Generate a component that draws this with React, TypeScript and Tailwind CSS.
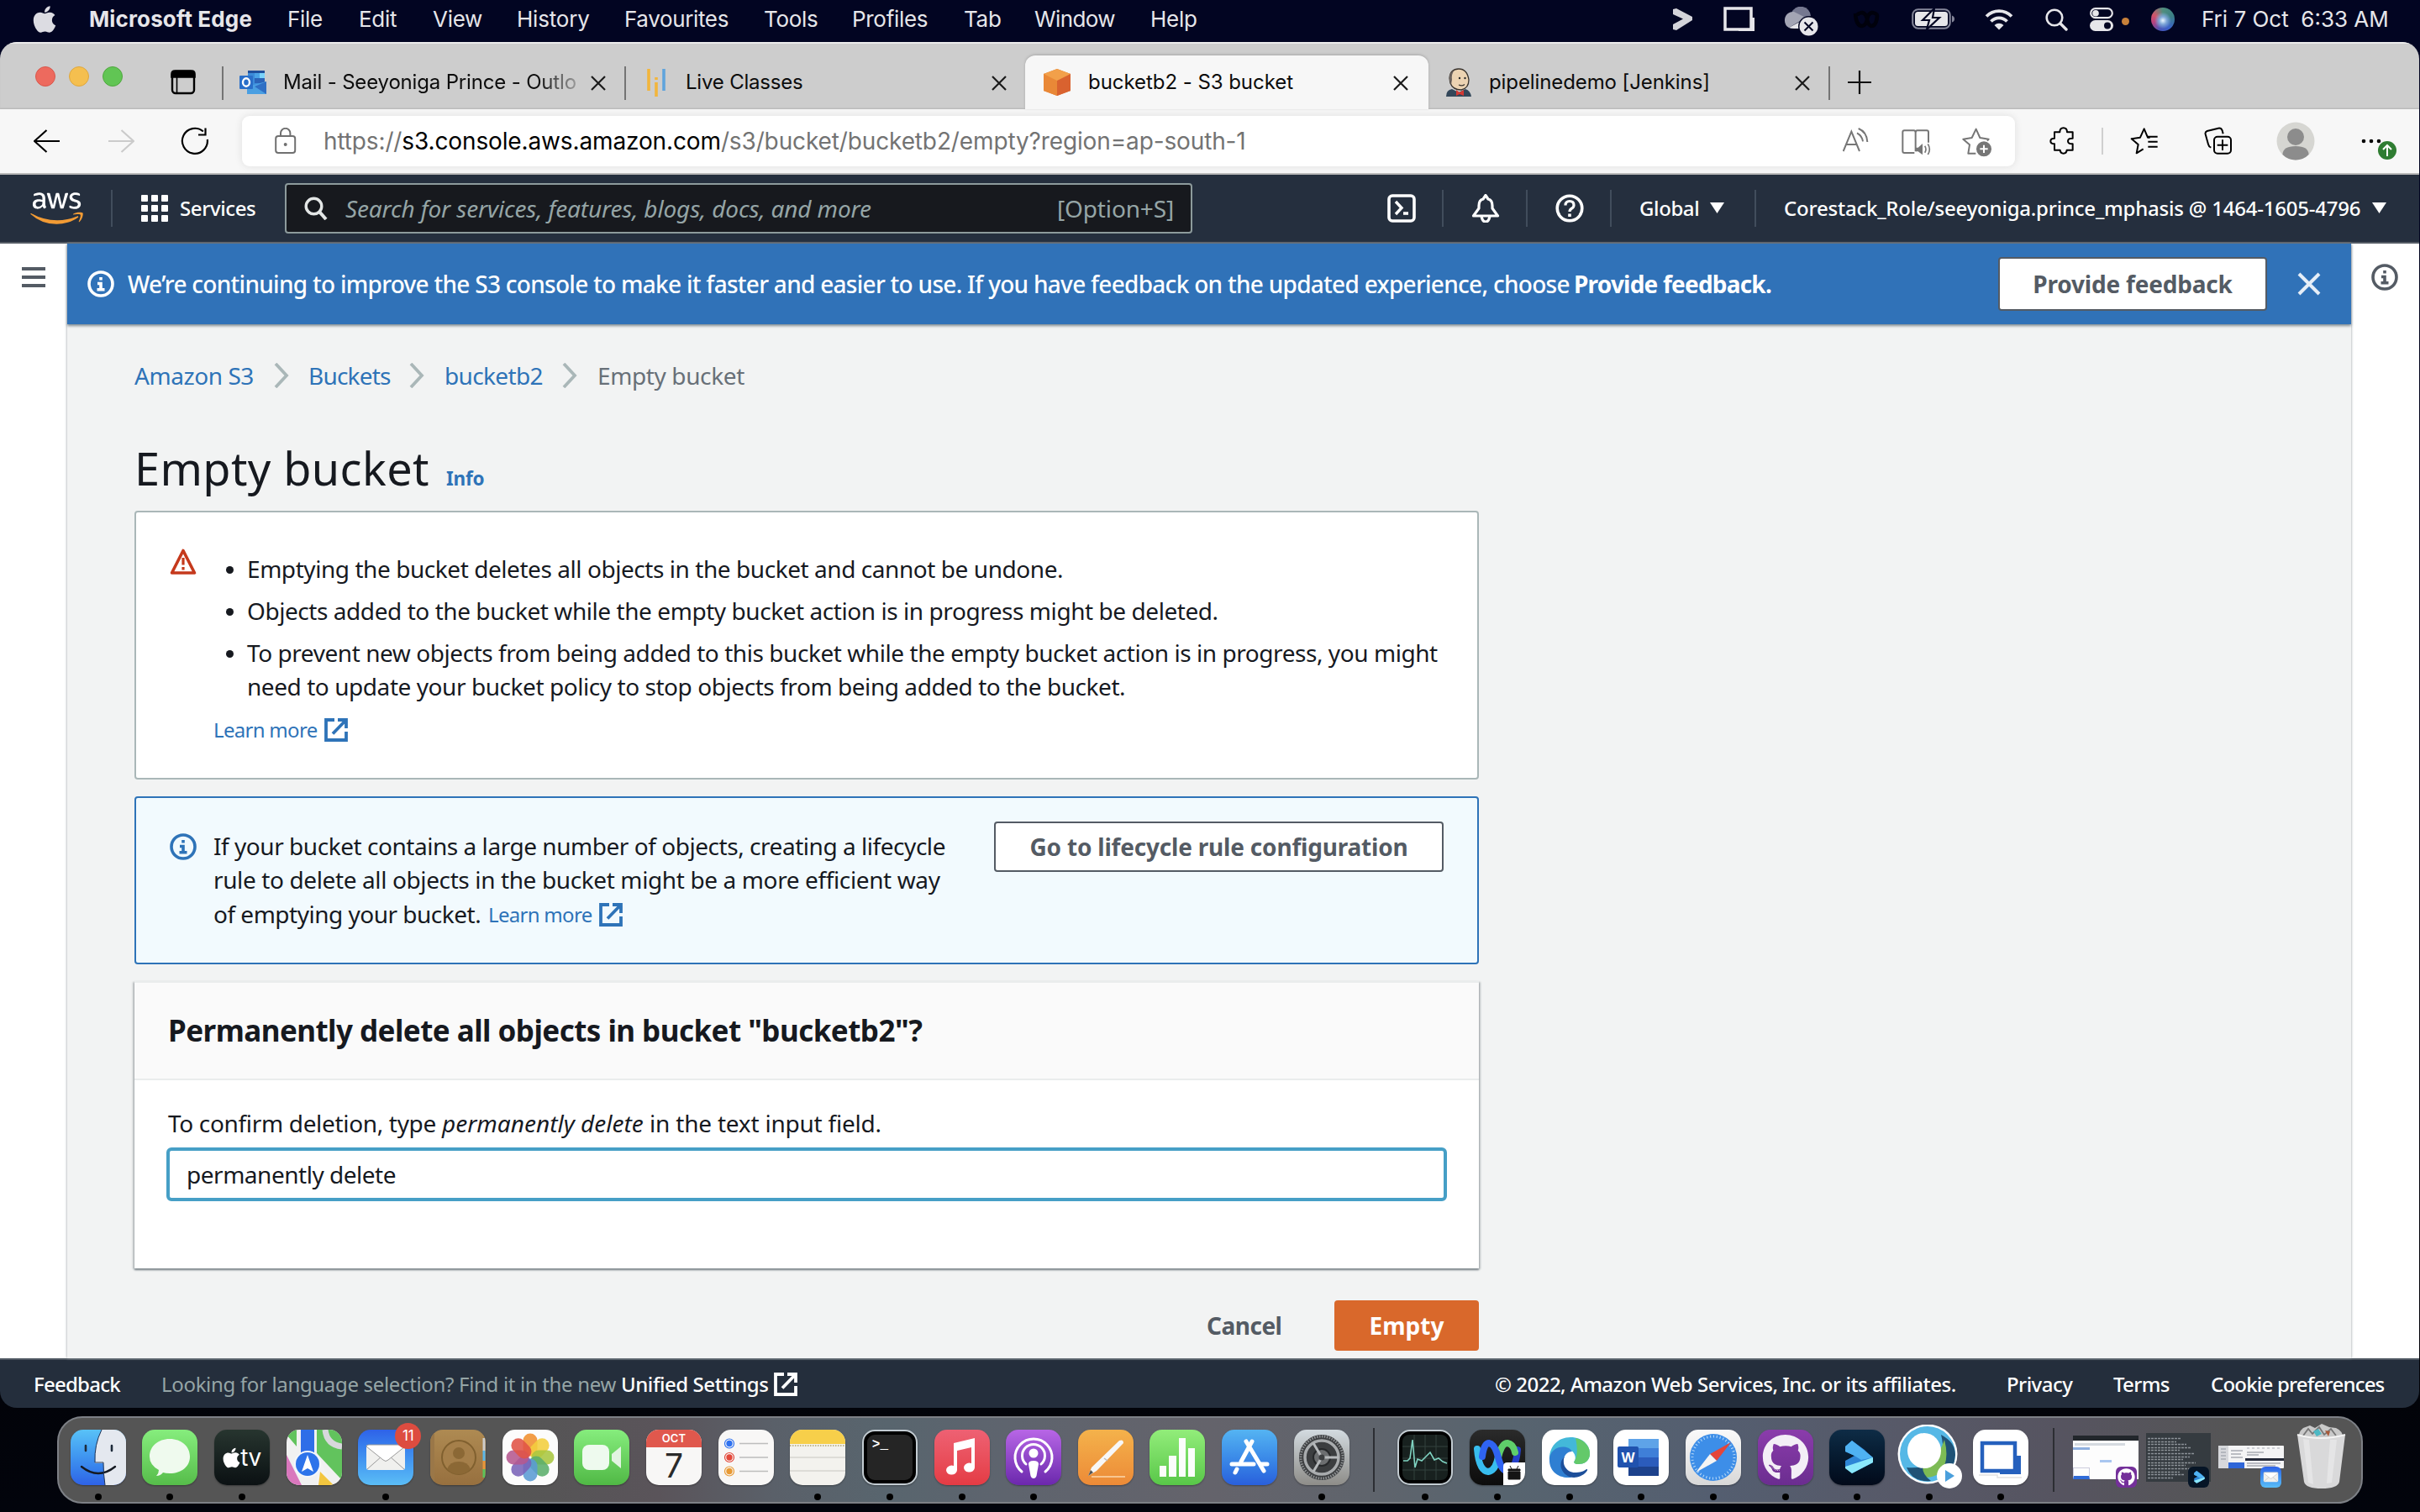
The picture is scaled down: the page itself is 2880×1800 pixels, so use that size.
import React from "react";
import { FaApple, FaAws, FaGithub } from "react-icons/fa";

type P = { children?: React.ReactNode };

const Svg = ({ w, h, vb, cls = "", children }: P & { w: number; h: number; vb?: string; cls?: string }) => (
  <svg width={w} height={h} viewBox={vb ?? `0 0 ${w} ${h}`} fill="none" className={`shrink-0 ${cls}`}>
    {children}
  </svg>
);

const T = ({ cls = "", children }: P & { cls?: string }) => (
  <span className={`block shrink-0 whitespace-nowrap ${cls}`}>{children}</span>
);

/* ---------- macOS menu bar ---------- */

function MenuBar() {
  return (
    <div className="flex h-[50px] items-center pb-[4px] pl-[35px] pr-[36px] font-['Inter',sans-serif] text-[26px] leading-[46px] text-[#e6e6ea]">
      <FaApple className="h-[36px] w-[36px] shrink-0 text-[#dcdce2]" />
      <T cls="ml-[35px] w-[196px] font-bold tracking-[0.14px]">Microsoft Edge</T>
      <T cls="ml-[40px] w-[43px] tracking-[-0.3px]">File</T>
      <T cls="ml-[42px] w-[48px] tracking-[-0.3px]">Edit</T>
      <T cls="ml-[40px] w-[59px] tracking-[-0.3px]">View</T>
      <T cls="ml-[41px] w-[88px] tracking-[-0.2px]">History</T>
      <T cls="ml-[40px] w-[126px] tracking-[-0.36px]">Favourites</T>
      <T cls="ml-[40px] w-[65px] tracking-[-0.3px]">Tools</T>
      <T cls="ml-[40px] w-[92px] tracking-[-0.3px]">Profiles</T>
      <T cls="ml-[41px] w-[44px] tracking-[-0.3px]">Tab</T>
      <T cls="ml-[40px] w-[98px] tracking-[-0.6px]">Window</T>
      <T cls="ml-[40px] w-[58px] tracking-[-0.3px]">Help</T>
      <div className="ml-auto flex items-center">
        <Svg w={24} h={28}>
          <path d="M0 2 4 1l19 10v4L4 27l-4-1v-6l12-6.500L0 8Z" fill="#d4d4da" />
        </Svg>
        <Svg w={38} h={30} cls="ml-[36px]">
          <path d="M2 2h31v25H2Z" stroke="#e6e6ea" strokeWidth="3.500" />
          <path d="M34 13h3v16H18v-3h16Z" fill="#e6e6ea" />
        </Svg>
        <Svg w={42} h={36} cls="ml-[34px] mt-[5px]">
          <path d="M9 7a12 12 0 0 1 23 4l-14 3Z" fill="#757890" />
          <path d="M1 17A10 10 0 0 1 12 6l14 7-20 12Q1 22 1 17Z" fill="#a3a5b4" />
          <path d="M6 25 26 14l8 5v7H12Q8 26 6 25Z" fill="#e6e6ea" />
          <circle cx="29.500" cy="23.500" r="12.500" fill="#020522" />
          <circle cx="29.500" cy="23.500" r="11" fill="#e6e6ea" />
          <path d="m24.500 18.500 10 10m0-10-10 10" stroke="#020522" strokeWidth="2" />
        </Svg>
        <Svg w={32} h={24} cls="ml-[40px]">
          <path d="M3 5q1 15 8 15 5-1 6-8t6-8q6 1 6 4-1 12-7 12-4-1-5-8t-6-8q-6 1-6 4" stroke="#00010c" strokeWidth="4.500" />
        </Svg>
        <Svg w={52} h={26} cls="ml-[38px]">
          <rect x="1.200" y="1.200" width="44.500" height="22.500" rx="6.500" stroke="#85879a" strokeWidth="2" />
          <rect x="4" y="4" width="39" height="17" rx="3.500" fill="#e6e6ea" />
          <path d="M48 8.500q3 1 3 4t-3 4Z" fill="#85879a" />
          <path d="M27 0 13 14h8l-3 11 15-14h-8Z" fill="#e6e6ea" stroke="#020522" strokeWidth="2.200" />
        </Svg>
        <Svg w={34} h={25} cls="ml-[35px]">
          <path d="M2 8.500a21 21 0 0 1 30 0" stroke="#e6e6ea" strokeWidth="3.800" />
          <path d="M7.500 14.500a13 13 0 0 1 19 0" stroke="#e6e6ea" strokeWidth="3.800" />
          <path d="M11.500 19a8 8 0 0 1 11 0L17 24.500Z" fill="#e6e6ea" />
        </Svg>
        <Svg w={27} h={27} cls="ml-[38px]">
          <circle cx="11" cy="11" r="9.300" stroke="#e6e6ea" strokeWidth="2.600" />
          <path d="m18 18 7 7" stroke="#e6e6ea" strokeWidth="3.400" strokeLinecap="round" />
        </Svg>
        <Svg w={28} h={28} cls="ml-[26px]">
          <rect x="1.200" y="1.200" width="25.600" height="11" rx="5.500" stroke="#e6e6ea" strokeWidth="2.200" />
          <circle cx="7" cy="6.700" r="3.800" fill="#e6e6ea" />
          <rect x="0" y="15" width="28" height="13" rx="6.500" fill="#e6e6ea" />
          <circle cx="21" cy="21.500" r="4" fill="#020522" />
        </Svg>
        <div className="ml-[10px] mt-[5px] h-[9px] w-[9px] rounded-full bg-[#c8813a]" />
        <div className="ml-[26px] h-[28px] w-[28px] rounded-full bg-[radial-gradient(circle_at_50%_55%,#eaf6ff_0%,#7fa8d8_22%,transparent_48%),conic-gradient(#4f8f7e,#3b7f86_20%,#3a62c8_40%,#4a55b8_55%,#b8417e_70%,#d3556a_82%,#4f8f7e)]" />
        <T cls="ml-[32px] w-[224px] whitespace-pre">Fri 7 Oct  6:33 AM</T>
      </div>
    </div>
  );
}

/* ---------- browser tabs ---------- */

const TabClose = ({ cls = "" }: { cls?: string }) => (
  <Svg w={18} h={18} cls={cls}>
    <path d="m1 1 16 16m0-16L1 17" stroke="#1a1a1a" strokeWidth="2.200" />
  </Svg>
);

const TabLine = ({ cls = "" }: { cls?: string }) => <div className={`h-[40px] w-[2px] shrink-0 bg-[#747474] ${cls}`} />;

function TabStrip() {
  return (
    <div className="flex h-[80px] items-end border-t-2 border-[#ececec] bg-[#cdcdcd] font-['Inter',sans-serif] text-[24px] leading-[32px] text-[#0c0c0c] shadow-[inset_0_-2px_2px_-1px_#b4b4b4]">
      <div className="flex h-[64px] w-[1220px] shrink-0 items-center pl-[42px]">
        <div className="mt-[-14px] flex gap-[16px]">
          <div className="h-[24px] w-[24px] rounded-full border border-[#d8574c] bg-[#ed6a5e]" />
          <div className="h-[24px] w-[24px] rounded-full border border-[#dea73e] bg-[#f5bf4f]" />
          <div className="h-[24px] w-[24px] rounded-full border border-[#50a73f] bg-[#61c554]" />
        </div>
        <Svg w={30} h={30} cls="ml-[57px]">
          <rect x="2" y="2" width="26" height="26" rx="4" stroke="#000" strokeWidth="2.400" />
          <path d="M1 9V5q0-4 4-4h20q4 0 4 4v4ZM7.500 8v20" fill="#000" stroke="#000" strokeWidth="1.600" />
        </Svg>
        <TabLine cls="ml-[31px] mt-[2px]" />
        <Svg w={34} h={30} cls="ml-[19px]">
          <path d="M10 1h20v27H10Z" fill="#3b8bd9" />
          <path d="M10 1h20v3H10Z" fill="#1f4f9c" />
          <path d="M18 4h6v6h-6Z" fill="#4aa3e6" />
          <path d="M24 4h6v6h-6Z" fill="#7ad3fa" />
          <path d="M18 10h12v6H18Z" fill="#2b63b8" />
          <path d="M9 20 32 14v15H9Z" fill="#4a9fe2" />
          <path d="m18 20 14 9V14Z" fill="#2f6fc4" />
          <rect x="0" y="7" width="16" height="16" rx="1" fill="#2a6fc9" />
          <ellipse cx="8" cy="15" rx="4" ry="4.700" stroke="#fff" strokeWidth="2.400" />
        </Svg>
        <div className="ml-[18px] w-[352px] shrink-0 whitespace-nowrap tracking-[-0.17px] [mask-image:linear-gradient(to_right,#000_86%,#0003_100%)]">
          Mail - Seeyoniga Prince - Outlo
        </div>
        <TabClose cls="ml-[14px] mt-[2px]" />
        <TabLine cls="ml-[22px] mt-[2px]" />
        <Svg w={22} h={34} cls="ml-[25px]">
          <path d="M2 1v26M11 11v3m0 3v17" stroke="#f2b53c" strokeWidth="3.600" />
          <path d="M20 1v26" stroke="#5fa4dc" strokeWidth="3.600" />
        </Svg>
        <T cls="ml-[24px] w-[160px] tracking-[-0.2px]">Live Classes</T>
        <TabClose cls="ml-auto mr-[22px] mt-[2px]" />
      </div>
      <div className="flex h-[64px] w-[480px] shrink-0 items-center rounded-t-[12px] bg-[#f7f7f7] pl-[21px] shadow-[0_-1px_3px_#a8a8a8]">
        <Svg w={34} h={34}>
          <path d="m17 1 16 6v20l-16 6L1 27V7Z" fill="#e07a34" />
          <path d="m17 1 16 6-16 10L1 7Z" fill="#f2a04a" />
          <path d="M17 15 33 7v20l-16 6Z" fill="#d9622f" />
          <path d="M17 15 1 7v20l16 6Z" fill="#e98837" />
        </Svg>
        <T cls="ml-[20px] w-[246px] tracking-[-0.05px]">bucketb2 - S3 bucket</T>
        <TabClose cls="ml-auto mr-[24px] mt-[2px]" />
      </div>
      <div className="flex h-[64px] items-center">
        <Svg w={32} h={34} cls="ml-[20px]">
          <path d="M1 34q0-8 7-9l8 4 8-4q6 2 7 9Z" fill="#33475a" />
          <path d="M5 12Q6 1 16 1t12 13q0 10-9 12-10 0-13-8Z" fill="#ecd3b2" stroke="#3a342e" strokeWidth="1.300" />
          <path d="M5 14Q4 5 11 2.500 7 7 8 14l-1 6Z" fill="#6b625e" />
          <path d="m13 26 4 3 5-3v7l-5-2-4 2Z" fill="#d33833" />
          <circle cx="17" cy="12" r="1.200" fill="#2a2a2a" />
          <circle cx="23.500" cy="12" r="1.200" fill="#2a2a2a" />
          <path d="M16 20q4 2 7-.5" stroke="#3a342e" strokeWidth="1.200" />
        </Svg>
        <T cls="ml-[20px] w-[264px] tracking-[-0.1px]">pipelinedemo [Jenkins]</T>
        <TabClose cls="ml-[100px] mt-[2px]" />
        <TabLine cls="ml-[22px] mt-[2px]" />
        <Svg w={28} h={28} cls="ml-[21px]">
          <path d="M14 0v28M0 14h28" stroke="#111" strokeWidth="2.200" />
        </Svg>
      </div>
    </div>
  );
}

/* ---------- address bar ---------- */

function Toolbar() {
  return (
    <div className="flex h-[78px] items-center border-b-2 border-[#b9b9b9] bg-[#f7f7f7] pl-[40px]">
      <Svg w={32} h={28}>
        <path d="M31 14H1M15.500 1 1 14l14.500 13" stroke="#000" strokeWidth="2.200" />
      </Svg>
      <Svg w={32} h={28} cls="ml-[56px]">
        <path d="M1 14h30M16.500 1 31 14 16.500 27" stroke="#cbcbcb" strokeWidth="2.200" />
      </Svg>
      <Svg w={34} h={34} cls="ml-[55px]">
        <path d="M31.800 15a15 15 0 1 1-5-9.500M29.500 1.500v8H21" stroke="#000" strokeWidth="2.200" />
      </Svg>
      <div className="ml-[39px] flex h-[60px] w-[2110px] shrink-0 items-center rounded-[9px] bg-white pl-[39px] shadow-[0_0_8px_#dedede]">
        <Svg w={26} h={32}>
          <rect x="1.200" y="10" width="23" height="20" rx="3" stroke="#707070" strokeWidth="2" />
          <path d="M7 10V6.500a5.700 5.700 0 0 1 11.400 0V10" stroke="#707070" strokeWidth="2" />
          <circle cx="12.700" cy="20" r="2" fill="#707070" />
        </Svg>
        <div className="ml-[32px] whitespace-nowrap font-['Inter',sans-serif] text-[28px] leading-[40px] tracking-[-0.13px] text-[#737373]">
          https://<span className="text-black">s3.console.aws.amazon.com</span>/s3/bucket/bucketb2/empty?region=ap-south-1
        </div>
        <Svg w={32} h={32} vb="41 50 96 96" cls="ml-auto">
          <path d="m43 134 29-70 29 70M54 110h37" stroke="#767676" strokeWidth="6" />
          <path d="M92 69q18 10 21 30M97 53q30 12 32 48" stroke="#767676" strokeWidth="6" />
        </Svg>
        <Svg w={36} h={32} vb="250 55 108 96" cls="ml-[38px] mt-[4px]">
          <path d="M300 66v68M296 139h-36q-6 0-6-6V65q0-6 6-6h34q6 0 6 8 0-8 6-8h34q6 0 6 6v37" stroke="#767676" strokeWidth="6" />
          <path d="M301 120h8l16-14v40l-16-12h-8Z" fill="#767676" />
          <path d="M333 114q8 12 0 24M344 107q12 19 0 38" stroke="#767676" strokeWidth="5" />
        </Svg>
        <Svg w={36} h={36} vb="466 50 108 108" cls="ml-[36px] mr-[27px] mt-[3px]">
          <path d="M515 142h-27l5-31-23-20 31-5 15-31 14 31 31 5-5 6" stroke="#767676" strokeWidth="6" strokeLinejoin="round" />
          <circle cx="544" cy="126" r="27" fill="#767676" />
          <path d="M544 112v28M530 126h28" stroke="#fff" strokeWidth="6" />
        </Svg>
      </div>
      <Svg w={30} h={34} vb="778 49 90 102" cls="ml-[41px]">
        <path
          d="M796 68h19q0-15 13-15t13 15h20v22q-17-1-17 10t17 10v22h-21q-1 12-12 12t-12-12h-20v-22q-14 0-14-10t14-10Z"
          stroke="#000" strokeWidth="6" strokeLinejoin="round"
        />
      </Svg>
      <div className="ml-[32px] h-[32px] w-[2px] shrink-0 bg-[#cfcfcf]" />
      <Svg w={34} h={34} vb="1066 49 102 102" cls="ml-[32px]">
        <path d="M1137 87h-8l-13-31-14 31-31 5 24 20-6 31 24-15" stroke="#000" strokeWidth="6" strokeLinejoin="round" />
        <path d="M1129 84h35M1130 102h34M1130 120h34" stroke="#000" strokeWidth="6" />
      </Svg>
      <Svg w={34} h={34} vb="1330 49 102 102" cls="ml-[54px]">
        <rect x="1366" y="84" width="60" height="60" rx="12" stroke="#000" strokeWidth="6" />
        <path d="M1396 95v38M1377 114h38" stroke="#000" strokeWidth="6" />
        <path d="M1355 123q-8-3-10-12l-10-36q-2-8 6-11l40-10q10-2 14 8l3 12" stroke="#000" strokeWidth="6" />
      </Svg>
      <Svg w={46} h={46} cls="ml-[52px]">
        <circle cx="23" cy="23" r="22.500" fill="#d6d6d2" />
        <circle cx="23" cy="18" r="10" fill="#8c8c8c" />
        <path d="M7.500 39q0-10 15.500-10t15.500 10Q32 45.500 23 45.500T7.500 39Z" fill="#8c8c8c" />
      </Svg>
      <Svg w={44} h={40} cls="ml-[55px] mt-[20px]">
        <circle cx="3" cy="10" r="2.300" fill="#000" />
        <circle cx="12" cy="10" r="2.300" fill="#000" />
        <circle cx="21" cy="10" r="2.300" fill="#000" />
        <circle cx="31" cy="21" r="11" fill="#2f7d32" />
        <path d="M31 28V15m-5 5 5-5 5 5" stroke="#fff" strokeWidth="2" />
      </Svg>
    </div>
  );
}

/* ---------- AWS navigation ---------- */

const NavLine = ({ cls = "" }: { cls?: string }) => <div className={`h-[44px] w-[2px] shrink-0 bg-[#414d5c] ${cls}`} />;

function AwsNav() {
  return (
    <div className="flex h-[82px] items-center border-b-2 border-[#545b64] bg-[#252f3e] pl-[36px] text-[24px] leading-[40px] text-white">
      <svg width="0" height="0" className="absolute">
        <linearGradient id="awsMark" gradientUnits="userSpaceOnUse" x1="0" y1="0" x2="0" y2="512">
          <stop offset="0.565" stopColor="#fff" />
          <stop offset="0.565" stopColor="#f29b34" />
        </linearGradient>
      </svg>
      <FaAws className="h-[50px] w-[63px] shrink-0" fill="url(#awsMark)" />
      <NavLine cls="ml-[33px]" />
      <div className="ml-[34px] grid grid-cols-3 gap-[4px]">
        {Array.from({ length: 9 }, (_, i) => (
          <div key={i} className="h-[8px] w-[8px] rounded-[1px] bg-white" />
        ))}
      </div>
      <T cls="ml-[14px] w-[90px] font-medium tracking-[-0.4px]">Services</T>
      <div className="ml-[35px] flex h-[60px] w-[1080px] shrink-0 items-center rounded-[4px] border-2 border-[#8d9b9c] bg-[#17191e] pl-[21px] pr-[20px] text-[28px] text-[#95a5a6]">
        <Svg w={28} h={28}>
          <circle cx="11.500" cy="11.500" r="9.300" stroke="#e3e6e6" strokeWidth="3.400" />
          <path d="m18 18 8 9" stroke="#e3e6e6" strokeWidth="4" />
        </Svg>
        <T cls="ml-[21px] italic tracking-[-0.15px]">Search for services, features, blogs, docs, and more</T>
        <T cls="ml-auto tracking-[-0.15px]">[Option+S]</T>
      </div>
      <Svg w={34} h={34} cls="ml-[232px]">
        <rect x="2" y="2" width="30" height="30" rx="4" stroke="#fff" strokeWidth="3.600" />
        <path d="m10 9 7 7.500-7 7.500" stroke="#fff" strokeWidth="3.400" />
        <path d="M19 23h6" stroke="#fff" strokeWidth="3.600" />
      </Svg>
      <NavLine cls="ml-[31px]" />
      <Svg w={34} h={34} cls="ml-[33px]">
        <path d="M2.500 26 9 17v-3q0-7 5-8l3-4.500L20 6q5 1 5 8v3l6.500 9Z" stroke="#fff" strokeWidth="3.200" strokeLinejoin="round" />
        <path d="M12 26q1 7 5 7t5-7" stroke="#fff" strokeWidth="3.200" />
      </Svg>
      <NavLine cls="ml-[31px]" />
      <Svg w={34} h={34} cls="ml-[33px]">
        <circle cx="17" cy="17" r="14.800" stroke="#fff" strokeWidth="3.600" />
        <path d="M12 13.500q0-5 5-5t5 4.700q0 2.500-2.500 4T17 21" stroke="#fff" strokeWidth="3.200" />
        <path d="M17 23.500v3.500" stroke="#fff" strokeWidth="3.600" />
      </Svg>
      <NavLine cls="ml-[31px]" />
      <T cls="ml-[33px] w-[72px] font-medium tracking-[-0.4px]">Global</T>
      <Svg w={17} h={14} cls="ml-[12px] mb-[2px]">
        <path d="M0 1h17L8.500 14Z" fill="#fff" />
      </Svg>
      <NavLine cls="ml-[36px]" />
      <T cls="ml-[33px] w-[690px] font-medium tracking-[-0.22px]">Corestack_Role/seeyoniga.prince_mphasis @ 1464-1605-4796</T>
      <Svg w={17} h={14} cls="ml-[10px] mb-[2px]">
        <path d="M0 1h17L8.500 14Z" fill="#fff" />
      </Svg>
    </div>
  );
}

/* ---------- page ---------- */

const InfoIcon = ({ cls = "", size = 32 }: { cls?: string; size?: number }) => (
  <Svg w={size} h={size} vb="0 0 32 32" cls={cls}>
    <circle cx="16" cy="16" r="14" stroke="currentColor" strokeWidth="3.600" />
    <path d="M16 8v3.600M12 15.500h4v7M11.500 22.800h9" stroke="currentColor" strokeWidth="3.600" />
  </Svg>
);

const ExternalIcon = ({ cls = "" }: { cls?: string }) => (
  <svg width="28" height="28" viewBox="0 0 28 28" fill="none" className={`shrink-0 ${cls}`}>
    <path d="M12 2H2v24h24V16M16 2h10v10M25.500 2.500 10 18.500" stroke="currentColor" strokeWidth="3.800" />
  </svg>
);

const Crumb = ({ cls = "" }: { cls?: string }) => (
  <Svg w={18} h={30} cls={cls}>
    <path d="m2 1 13 14L2 29" stroke="#aab7b8" strokeWidth="3.800" />
  </Svg>
);

function Banner() {
  return (
    <div className="relative flex h-[96px] items-center bg-[#3072b8] pl-[24px] text-[28px] leading-[40px] text-white shadow-[0_2px_3px_#7f8a90]">
      <InfoIcon />
      <T cls="ml-[16px] w-[1721px] font-medium tracking-[-0.72px]">
        We’re continuing to improve the S3 console to make it faster and easier to use. If you have feedback on the updated experience, choose
      </T>
      <T cls="font-bold tracking-[-0.79px]">Provide feedback.</T>
      <div className="ml-auto mr-[36px] flex h-[64px] w-[320px] items-center justify-center rounded-[4px] border-2 border-[#545b64] bg-white font-bold tracking-[-0.2px] text-[#545b64]">
        Provide feedback
      </div>
      <Svg w={28} h={28} cls="mr-[36px]">
        <path d="m2 2 24 24M26 2 2 26" stroke="#e6eef7" strokeWidth="4" />
      </Svg>
    </div>
  );
}

function Content() {
  return (
    <div className="w-[1600px] text-[28px] leading-[40px] tracking-[-0.44px] text-[#16191f]">
      <div className="flex items-center pt-[41px] text-[#2e73b8]">
        <T cls="w-[142px]">Amazon S3</T>
        <Crumb cls="ml-[24px]" />
        <T cls="ml-[23px] w-[97px] tracking-[-0.8px]">Buckets</T>
        <Crumb cls="ml-[23px]" />
        <T cls="ml-[24px] w-[117px] tracking-[-0.65px]">bucketb2</T>
        <Crumb cls="ml-[23px]" />
        <T cls="ml-[24px] tracking-[-0.38px] text-[#687078]">Empty bucket</T>
      </div>
      <div className="mt-[50px] flex h-[80px] items-baseline leading-[80px]">
        <h1 className="w-[371px] whitespace-nowrap text-[54px] tracking-[0.4px]">Empty bucket</h1>
        <span className="text-[22.500px] font-bold tracking-[-0.2px] text-[#2e73b8]">Info</span>
      </div>

      <div className="mt-[11px] flex h-[320px] rounded-[4px] border-2 border-[#aab7b8] bg-white pl-[40px] pt-[42px]">
        <Svg w={32} h={32}>
          <path d="M16 3.500 29.500 30h-27Z" stroke="#c5391c" strokeWidth="3.600" strokeLinejoin="round" />
          <path d="M16 12v8.500M16 23v3.600" stroke="#c5391c" strokeWidth="3.200" />
        </Svg>
        <div className="ml-[20px] pt-[5px]">
          <ul className="flex flex-col gap-[10px] whitespace-nowrap">
            {[
              ["Emptying the bucket deletes all objects in the bucket and cannot be undone."],
              ["Objects added to the bucket while the empty bucket action is in progress might be deleted."],
              [
                "To prevent new objects from being added to this bucket while the empty bucket action is in progress, you might",
                "need to update your bucket policy to stop objects from being added to the bucket.",
              ],
            ].map((lines) => (
              <li key={lines[0]} className="flex">
                <div className="ml-[15px] mr-[16px] mt-[17px] h-[9px] w-[9px] rounded-full bg-[#16191f]" />
                <div>
                  {lines.map((l) => (
                    <div key={l}>{l}</div>
                  ))}
                </div>
              </li>
            ))}
          </ul>
          <div className="mt-[12px] flex items-center text-[24px] tracking-[-0.7px] text-[#2e73b8]">
            <T cls="w-[132px]">Learn more</T>
            <ExternalIcon />
          </div>
        </div>
      </div>

      <div className="mt-[20px] flex h-[200px] rounded-[4px] border-2 border-[#2e73b8] bg-[#f2fafe] pl-[40px] pr-[40px] pt-[28px]">
        <InfoIcon cls="mt-[14px] text-[#2e73b8]" />
        <div className="ml-[20px] whitespace-nowrap pt-[9px]">
          <div className="tracking-[-0.46px]">If your bucket contains a large number of objects, creating a lifecycle</div>
          <div className="tracking-[-0.38px]">rule to delete all objects in the bucket might be a more efficient way</div>
          <div className="flex items-center">
            <T cls="w-[327px] tracking-[-0.5px]">of emptying your bucket.</T>
            <T cls="mt-[2px] w-[132px] text-[24px] tracking-[-0.7px] text-[#2e73b8]">Learn more</T>
            <ExternalIcon cls="mt-[2px] text-[#2e73b8]" />
          </div>
        </div>
        <div className="ml-auto flex h-[60px] w-[535px] items-center justify-center rounded-[4px] border-2 border-[#545b64] bg-white font-bold tracking-[-0.2px] text-[#545b64]">
          Go to lifecycle rule configuration
        </div>
      </div>

      <div className="mt-[20px] h-[342px] bg-white shadow-[0_2px_2px_#7d868c,2px_1px_2px_#c3c8c9,-2px_1px_2px_#c3c8c9]">
        <div className="flex h-[118px] items-center border-b-2 border-t-2 border-[#eaeded] bg-[#fafafa] px-[40px] text-[35px] font-bold tracking-[-0.54px]">
          Permanently delete all objects in bucket "bucketb2"?
        </div>
        <div className="px-[38px] pt-[31px]">
          <div className="flex whitespace-pre pl-[2px]">
            <T cls="w-[326px] whitespace-pre tracking-[-0.33px]">To confirm deletion, type </T>
            <T cls="w-[240px] italic tracking-[0px]">permanently delete</T>
            <T cls="whitespace-pre tracking-[-0.21px]"> in the text input field.</T>
          </div>
          <div className="mt-[9px] flex h-[64px] items-center rounded-[6px] border-4 border-[#469fc6] bg-white pl-[20px] tracking-[-0.48px]">
            permanently delete
          </div>
        </div>
      </div>

      <div className="mt-[38px] flex items-center justify-end font-bold">
        <T cls="w-[152px] tracking-[-0.5px] text-[#545b64]">Cancel</T>
        <div className="flex h-[60px] w-[172px] items-center justify-center rounded-[4px] bg-[#d9682b] tracking-[0px] text-white">Empty</div>
      </div>
    </div>
  );
}

function Footer() {
  return (
    <div className="flex h-[59px] items-center border-t-2 border-[#4f5862] bg-[#242e3c] pl-[40px] pr-[42px] text-[24px] leading-[40px] text-white">
      <T cls="w-[152px] font-medium tracking-[-0.75px]">Feedback</T>
      <T cls="w-[547px] whitespace-pre tracking-[-0.33px] text-[#95a5a6]">Looking for language selection? Find it in the new </T>
      <T cls="w-[182px] font-medium tracking-[-0.45px]">Unified Settings</T>
      <ExternalIcon />
      <T cls="ml-auto w-[609px] font-medium tracking-[-0.5px]">© 2022, Amazon Web Services, Inc. or its affiliates.</T>
      <T cls="w-[127px] font-medium tracking-[-0.55px]">Privacy</T>
      <T cls="w-[116px] font-medium tracking-[-0.7px]">Terms</T>
      <T cls="w-[206px] font-medium tracking-[-0.8px]">Cookie preferences</T>
    </div>
  );
}

/* ---------- dock ---------- */

const Tile = ({ cls = "", children }: P & { cls?: string }) => (
  <div className={`relative flex h-[66px] w-[66px] items-center justify-center overflow-hidden rounded-[15px] shadow-[0_1px_2px_#0005] ${cls}`}>
    {children}
  </div>
);

const S66 = ({ children }: P) => (
  <Svg w={66} h={66}>
    {children}
  </Svg>
);

const Envelope = () => (
  <>
    <rect x="10" y="18" width="46" height="30" rx="3" fill="#f0f0ee" />
    <path d="m11 47 17-15M55 47 38 32" stroke="#9a9a9a" strokeWidth="1" />
    <path d="M10 20q0-2 3-2h40q3 0 3 2L36 36q-3 3-6 0Z" fill="#fff" stroke="#9a9a9a" strokeWidth="1" />
  </>
);

const VsChevron = () => (
  <>
    <path d="m19 20 8-7 15 11 10 10v5L27 52l-8-7V37l11-6-11-5Z" fill="#2e86d6" />
    <path d="m19 20 8-7 25 20-14 3-8-5-11-5Z" fill="#4fb2f2" />
    <path d="M52 33v6L27 52l-8-6v-2Z" fill="#8be8fb" />
  </>
);

const petals = ["#f0902f", "#f2ce3d", "#a9c640", "#5bae6b", "#5a9bd4", "#7a63b8", "#b5588f", "#e05345"];

type App = { icon: React.ReactNode; run?: boolean };

const left: App[] = [
  {
    run: true,
    icon: (
      <Tile cls="bg-linear-to-b from-[#59c2f7] to-[#2f62e6]">
        <S66>
          <path d="M37 0h29v66H41q-2-13-2-26H29Q28 18 37 0Z" fill="#e4e8ef" />
          <path d="M18 19v6M49 19v6" stroke="#1d2a3a" strokeWidth="2.600" strokeLinecap="round" />
          <path d="M13 44q20 16 40 0" stroke="#151a22" strokeWidth="2.400" strokeLinecap="round" />
          <path d="M37 0Q28 18 29 39h10q0 14 2 27" stroke="#1d3357" strokeWidth="1" />
        </S66>
      </Tile>
    ),
  },
  {
    run: true,
    icon: (
      <Tile cls="bg-linear-to-b from-[#86ed7d] to-[#56bd4a]">
        <S66>
          <path d="M33 11c14 0 24 9 24 21S47 52 33 52q-5 0-8-1-3 4-8 4 3-3 3-7Q9 42 9 32C9 20 19 11 33 11Z" fill="#effaee" />
        </S66>
      </Tile>
    ),
  },
  {
    run: true,
    icon: (
      <Tile cls="bg-linear-to-b from-[#27352f] to-[#0b1113] text-white">
        <FaApple className="h-[27px] w-[21px] shrink-0" />
        <span className="font-['Inter',sans-serif] text-[28px] leading-[30px] tracking-[-0.5px]">tv</span>
      </Tile>
    ),
  },
  {
    icon: (
      <Tile cls="bg-[#f1f1f1]">
        <S66>
          <path d="M0 30v36h18Z" fill="#d977bd" />
          <path d="M0 0h12v20L0 6ZM36 0h30v60L36 28Z" fill="#62c35d" />
          <path d="M36 28v38h18Z" fill="#f3f3f3" />
          <path d="M40 50 56 66H38Z" fill="#f3c63f" />
          <path d="M17 0h16v42H17Z" fill="#2f6ee8" />
          <path d="M46 0q2 18 20 20" stroke="#d8d8dc" strokeWidth="7" />
          <circle cx="25" cy="41" r="16" fill="#f4f6fa" />
          <circle cx="25" cy="41" r="14" fill="#2d73ea" />
          <path d="m25 30 7 20-7-4-7 4Z" fill="#fff" />
        </S66>
      </Tile>
    ),
  },
  {
    run: true,
    icon: (
      <div className="relative">
        <Tile cls="bg-linear-to-b from-[#2f62e8] to-[#5bbdf6]">
          <S66>
            <Envelope />
          </S66>
        </Tile>
        <div className="absolute right-[-9px] top-[-8px] flex h-[31px] w-[31px] items-center justify-center rounded-full bg-[#dd4c40] font-['Inter',sans-serif] text-[17px] text-white">11</div>
      </div>
    ),
  },
  {
    icon: (
      <Tile cls="bg-linear-to-b from-[#ae8a52] to-[#97703f]">
        <S66>
          <path d="M0 0h5v66H0Z" fill="#9a7748" />
          <circle cx="34" cy="33" r="20" stroke="#80602f" strokeWidth="2" fill="#a57f4a" />
          <circle cx="34" cy="28" r="7" fill="#8b6835" />
          <path d="M20 47q3-9 14-9t14 9q-6 6-14 6t-14-6Z" fill="#8b6835" />
          <path d="M64 10v15" stroke="#ccc" strokeWidth="3" />
          <path d="M64 25v12" stroke="#5bb6e8" strokeWidth="3" />
          <path d="M64 37v10" stroke="#e8963a" strokeWidth="3" />
          <path d="M64 47v10" stroke="#5cc35a" strokeWidth="3" />
        </S66>
      </Tile>
    ),
  },
  {
    icon: (
      <Tile cls="bg-[#fcfcfc]">
        <S66>
          {petals.map((c, i) => (
            <rect key={c} x="24.500" y="4.500" width="17" height="27" rx="8.500" fill={c} fillOpacity="0.880" transform={`rotate(${i * 45} 33 33)`} />
          ))}
        </S66>
      </Tile>
    ),
  },
  {
    icon: (
      <Tile cls="bg-linear-to-b from-[#86ed7d] to-[#50b945]">
        <S66>
          <rect x="10" y="18" width="32" height="30" rx="8" fill="#eefaee" />
          <path d="M45 29 56 20v26l-11-9Z" fill="#e2f4e1" />
        </S66>
      </Tile>
    ),
  },
  {
    icon: (
      <Tile cls="flex-col bg-[#f8f7f6]">
        <div className="flex h-[21px] w-full shrink-0 items-center justify-center bg-[#e0584d] font-['Inter',sans-serif] text-[13px] font-semibold text-white">OCT</div>
        <div className="flex-1 font-['Inter',sans-serif] text-[39px] leading-[43px] text-[#2a2a2a]">7</div>
      </Tile>
    ),
  },
  {
    icon: (
      <Tile cls="bg-[#f8f7f6]">
        <S66>
          {["#2f72f0", "#e3483a", "#e89a35"].map((c, i) => (
            <g key={c}>
              <circle cx="13" cy={16.5 + i * 16.5} r="5.500" stroke={c} strokeWidth="1.200" />
              <circle cx="13" cy={16.5 + i * 16.5} r="3.700" fill={c} />
              <path d={`M25 ${16.5 + i * 16.5}h34`} stroke="#bdbdbd" strokeWidth="1.500" />
            </g>
          ))}
        </S66>
      </Tile>
    ),
  },
  {
    run: true,
    icon: (
      <Tile cls="bg-[#f3f2ee]">
        <S66>
          <path d="M0 0h66v17H0Z" fill="#f7cf4a" />
          <path d="M0 19h66" stroke="#c0b890" strokeWidth="2" strokeDasharray="1.500 1.500" />
          <path d="M0 33h66M0 49h66" stroke="#d6d5d0" strokeWidth="1.500" />
        </S66>
      </Tile>
    ),
  },
  {
    run: true,
    icon: (
      <Tile cls="border-2 border-[#c3ccd2] bg-black">
        <div className="flex h-[54px] w-[54px] shrink-0 rounded-[9px] bg-[#252525] pl-[6px] pt-[2px] font-['Liberation_Mono',monospace] text-[16px] font-bold leading-[20px] text-white">&gt;_</div>
      </Tile>
    ),
  },
  {
    run: true,
    icon: (
      <Tile cls="bg-linear-to-b from-[#ee6173] to-[#e43b44]">
        <S66>
          <path d="M23 16 48 10v35a6.500 5.500 0 1 1-4-5V21l-17 4v23a6.500 5.500 0 1 1-4-5Z" fill="#fff" />
        </S66>
      </Tile>
    ),
  },
  {
    run: true,
    icon: (
      <Tile cls="bg-linear-to-b from-[#b866e6] to-[#6c27ad]">
        <S66>
          <path d="M19 50a22 22 0 1 1 28 0M24 41a13.500 13.500 0 1 1 18 0" stroke="#fff" strokeWidth="3" strokeLinecap="round" />
          <circle cx="33" cy="28" r="5.500" fill="#fff" />
          <path d="M27 41q0-4 6-4t6 4l-2.500 14q-1 3-3.500 3t-3.500-3Z" fill="#fff" />
        </S66>
      </Tile>
    ),
  },
  {
    icon: (
      <Tile cls="bg-linear-to-b from-[#f4b24b] to-[#ec8a37]">
        <S66>
          <path d="M16 56h40" stroke="#f8c690" strokeWidth="2" />
          <path d="m12 55 4-10 33-32q5-2 5 3L22 49Z" fill="#f7f7f7" />
          <path d="m12 55 3-7 3 3Z" fill="#555" />
          <path d="m31 34 4 3" stroke="#bbb" strokeWidth="1.500" />
        </S66>
      </Tile>
    ),
  },
  {
    icon: (
      <Tile cls="bg-linear-to-b from-[#92ed7a] to-[#58c748]">
        <S66>
          <path d="M12 43h8v13h-8ZM23 31h9v25h-9ZM35 10h8v46h-8ZM46 22h8v34h-8Z" fill="#fbfdfb" />
        </S66>
      </Tile>
    ),
  },
  {
    icon: (
      <Tile cls="bg-linear-to-b from-[#55b4f2] to-[#2a5fdc]">
        <S66>
          <path d="M36 14 23 38M29 14l21 35" stroke="#fff" strokeWidth="5" strokeLinecap="round" />
          <path d="M12 41h26M46 41h8M18 47l-2 4" stroke="#fff" strokeWidth="5" strokeLinecap="round" />
        </S66>
      </Tile>
    ),
  },
  {
    run: true,
    icon: (
      <Tile cls="bg-linear-to-b from-[#d3dbe0] to-[#8e8d89]">
        <S66>
          <circle cx="33" cy="33" r="27" fill="#3c3e40" />
          <circle cx="33" cy="33" r="25" stroke="#8e9193" strokeWidth="3" strokeDasharray="1.500 1.500" />
          <circle cx="33" cy="33" r="20" stroke="#a8abad" strokeWidth="3.500" />
          <circle cx="33" cy="33" r="10" fill="#6c6e70" stroke="#26282a" strokeWidth="2" />
          <path d="M33 33h20M33 33 23 16M33 33 23 50" stroke="#b6b9bb" strokeWidth="3" />
          <circle cx="33" cy="33" r="3.500" fill="#3c3e40" />
        </S66>
      </Tile>
    ),
  },
];

const right: App[] = [
  {
    run: true,
    icon: (
      <Tile cls="border-2 border-[#c3ccd2] bg-black">
        <S66>
          <rect x="6" y="6" width="54" height="54" rx="8" fill="#18211f" />
          <path d="M6 20h54M6 34h54M6 48h54M20 6v54M33 6v54M46 6v54" stroke="#33423e" strokeWidth="1" />
          <path d="M7 37h5l3-3 3-22 3 33 3-10 5 2 5-5 5-5 5 9 5-2 5 4 5 2" stroke="#7fd3c1" strokeWidth="1.600" />
        </S66>
      </Tile>
    ),
  },
  {
    run: true,
    icon: (
      <Tile cls="bg-linear-to-b from-[#2b2b2b] to-[#0c0c0c]">
        <S66>
          <path d="M44 49Q55 48 57 24" stroke="#2540c8" strokeWidth="8" strokeLinecap="round" />
          <path d="M9 23q2 26 13 27 9-1 12-18" stroke="#38bdee" strokeWidth="8" strokeLinecap="round" />
          <path d="M34 33q4-17 11-17 7 1 9 11" stroke="#5fce6a" strokeWidth="8" strokeLinecap="round" />
          <path d="M15 32q2-16 8-16 7 1 11 17t10 16" stroke="#2f63f2" strokeWidth="8" strokeLinecap="round" />
          <path d="M40 44q0-5 5-5h21v27H40Z" fill="#fff" />
          <path d="M46 50h14v9H46ZM46 47h14v2H46ZM48 43l2 4M58 43l-2 4" fill="#151515" stroke="#151515" strokeWidth="1" />
        </S66>
      </Tile>
    ),
  },
  {
    run: true,
    icon: (
      <Tile cls="bg-white">
        <S66>
          <path d="M9 37C8 20 19 9 34 9c15 0 24 10 23 21-1 8-7 11-14 11-4 0-6-2-4-4 2-4 0-11-6-13C24 21 13 26 9 37Z" fill="#43b8d9" />
          <path d="M40 10c11 2 18 11 17 20-1 8-7 11-14 11-4 0-6-2-4-4 3-5 4-14 1-27Z" fill="#63c96a" />
          <path d="M9 37C8 20 30 16 36 26c-12 0-14 18-4 27 2 2 5 3 2 4C18 58 9 48 9 37Z" fill="#2f7fd2" />
          <path d="M27 32c-4 8 2 20 14 19 6 0 11-3 12-4 2 0 1 2 0 3-6 7-15 8-20 6-11-4-14-17-6-24Z" fill="#1d4f9a" />
        </S66>
      </Tile>
    ),
  },
  {
    run: true,
    icon: (
      <Tile cls="bg-white">
        <S66>
          <path d="M18 11h36v11H18Z" fill="#5ea3e8" />
          <path d="M18 22h36v11H18Z" fill="#3f7fd8" />
          <path d="M18 33h36v11H18Z" fill="#2b5cbc" />
          <path d="M18 44h36v11H18Z" fill="#1d428c" />
          <rect x="5" y="20" width="25" height="25" rx="2" fill="#2052ae" />
          <text x="17.500" y="38.500" textAnchor="middle" fontFamily="Liberation Sans, sans-serif" fontWeight="700" fontSize="17" fill="#fff">W</text>
        </S66>
      </Tile>
    ),
  },
  {
    run: true,
    icon: (
      <Tile cls="bg-linear-to-b from-[#fafafa] to-[#d8d8d8]">
        <S66>
          <circle cx="33" cy="33" r="28" fill="#3d8ee8" />
          <circle cx="33" cy="33" r="25" stroke="#bcdcf8" strokeWidth="3" strokeDasharray="1 2.900" />
          <path d="m54 15-17 22-8-8Z" fill="#e4453a" />
          <path d="m12 51 25-14-8-8Z" fill="#f4f4f4" />
        </S66>
      </Tile>
    ),
  },
  {
    run: true,
    icon: (
      <Tile cls="bg-linear-to-b from-[#8b3cab] to-[#6b2d90]">
        <FaGithub className="h-[56px] w-[56px] text-[#f3eef6]" />
      </Tile>
    ),
  },
  {
    run: true,
    icon: (
      <Tile cls="bg-linear-to-b from-[#0e2c46] to-[#020a1a]">
        <S66>
          <VsChevron />
        </S66>
      </Tile>
    ),
  },
  {
    run: true,
    icon: (
      <svg width="78" height="78" viewBox="0 0 78 78" fill="none" className="mx-[-6px] my-[-6px] shrink-0">
        <circle cx="37" cy="35" r="35.500" fill="#fff" />
        <circle cx="37" cy="35" r="33" fill="#56b8e6" />
        <path d="M53 12q17 9 17 24-1 16-12 25L47 48q12-14 6-36Z" fill="#1f5276" />
        <path d="M14 52q30 4 43-34 7 26-6 40-18 12-37-6Z" fill="#7dbb55" />
        <path d="M12 51q9 1 19-1 0 10 10 17-22 2-29-16Z" fill="#1f5276" />
        <ellipse cx="33" cy="31" rx="20" ry="21" fill="#fff" />
        <circle cx="63" cy="61" r="15" fill="#fff" />
        <path d="m58 54 11 7-11 7Z" fill="#4a9fdc" />
      </svg>
    ),
  },
  {
    run: true,
    icon: (
      <Tile cls="bg-white">
        <S66>
          <path d="M11 16h39v33H11Z" stroke="#2560bd" strokeWidth="4.500" />
          <path d="M52 31h5v22H32v-4h20Z" fill="#2560bd" />
          <path d="M7 54h22v3h29" stroke="#e2e2e2" strokeWidth="1.500" />
        </S66>
      </Tile>
    ),
  },
];

const Slot = ({ icon, run }: App) => (
  <div className="flex w-[85.650px] shrink-0 flex-col items-center pt-[14px]">
    {icon}
    {run && <div className="mt-[10px] h-[8px] w-[8px] rounded-full bg-black" />}
  </div>
);

const DockLine = ({ cls = "" }: { cls?: string }) => <div className={`mt-[12px] h-[76px] w-[2px] shrink-0 bg-[#2c2e33] ${cls}`} />;

const MiniBadge = ({ cls = "", children }: P & { cls?: string }) => (
  <div className={`absolute flex h-[25px] w-[25px] items-center justify-center overflow-hidden rounded-[6px] ${cls}`}>{children}</div>
);

function Dock() {
  return (
    <div className="ml-[68px] mt-[10px] flex h-[104px] w-[2744px] rounded-[30px] border-2 border-[#7d8086] bg-[linear-gradient(90deg,#555_0%,#555_20%,#5a545a_26%,#5a6069_31%,#58656e_36%,#5e646e_41%,#64636b_50%,#5f646c_57%,#57646f_63%,#545e70_72%,#575968_80%,#565460_87%,#555_95%)] pl-[4px]">
      {left.map((a, i) => (
        <Slot key={i} {...a} />
      ))}
      <DockLine cls="ml-[18px] mr-[18px]" />
      {right.map((a, i) => (
        <Slot key={i} {...a} />
      ))}
      <DockLine cls="ml-[19px]" />
      <div className="relative ml-[22px] mt-[21px] h-[53px] w-[78px] shrink-0">
        <div className="flex h-[52px] flex-col bg-[#fdfdfd]">
          <div className="h-[6px] bg-[#22272c]" />
          <div className="mt-[3px] ml-[2px] h-[3px] w-[60px] bg-[#d5dae0]" />
          <div className="mt-[2px] h-[3px] w-[20px] bg-[#8fb0e0]" />
          <div className="mx-auto mt-[12px] h-[3px] w-[14px] bg-[#a9c6f0]" />
          <div className="mt-auto h-[14px] w-[20px] border border-[#ccd] border-b-[#2f6bd8] border-b-4" />
        </div>
        <MiniBadge cls="left-[51px] top-[37px] bg-[#74309a]">
          <FaGithub className="h-[21px] w-[21px] text-white" />
        </MiniBadge>
      </div>
      <div className="relative ml-[9px] mt-[18px] h-[58px] w-[77px] shrink-0 bg-[#353b40] pt-[5px]">
        {[40, 34, 46, 52, 38, 55, 50, 42, 57, 45, 60, 38, 44, 30].map((w, i) => (
          <svg key={i} width={w} height="3.600" className="ml-[2px] block">
            <path d={`M0 1.500h${w}`} stroke="#8b9196" strokeWidth="1.400" strokeDasharray="3 1" />
          </svg>
        ))}
        <MiniBadge cls="left-[50px] top-[40px] bg-[#061526]">
          <Svg w={25} h={25} vb="0 0 66 66">
            <VsChevron />
          </Svg>
        </MiniBadge>
      </div>
      <div className="relative ml-[9px] mt-[33px] h-[27px] w-[78px] shrink-0">
        <Svg w={78} h={27}>
          <rect width="78" height="27" rx="1" fill="#f4f4f5" />
          <path d="M0 0h12v27H0Z" fill="#d7d8dc" />
          <path d="M3 4h6M3 8h6M3 12h6M3 16h6M15 6h14M15 10h12M15 14h14M34 8h20M34 11h14M34 21h40M34 24h34" stroke="#a8abb2" strokeWidth="1.300" />
          <path d="M12 20h19v7H12Z" fill="#2f66d8" />
          <path d="M32 15h46v3H32Z" fill="#262b3a" />
          <path d="M34 3h40" stroke="#c2c4ca" strokeWidth="1.500" strokeDasharray="3 3" />
        </Svg>
        <MiniBadge cls="left-[50px] top-[25px] bg-linear-to-b from-[#2f62e8] to-[#5bbdf6]">
          <Svg w={25} h={25} vb="0 0 66 66">
            <Envelope />
          </Svg>
        </MiniBadge>
      </div>
      <Svg w={60} h={78} cls="ml-[15px] mt-[7px]">
        <path d="M3 16Q2 10 8 5l8-3 6 3 8-5 9 4 8 1q9 4 8 12Z" fill="#c9c9c9" />
        <path d="m8 14 6-8 5 6 8-8 6 9 8-7 6 8" stroke="#777" strokeWidth="1.800" />
        <path d="m20 9 6-3 4 6-6 3Z" fill="#4db8c4" />
        <path d="m34 8 6 1-2 6Z" fill="#a85a3a" />
        <path d="M1 13q28 8 57 0l-7 56q-2 8-21 8T9 69Z" fill="#d9d9da" />
        <path d="m8 18 6 52 6 2-5-53ZM40 19l-4 52 6-1 6-51Z" fill="#e5e5e6" />
        <path d="M1 13q28 8 57 0" stroke="#f4f4f4" strokeWidth="2" />
      </Svg>
    </div>
  );
}

export default function App() {
  return (
    <div className="h-[1800px] w-[2880px] overflow-hidden bg-[linear-gradient(#020522_0%,#020522_10%,#020308_90%,#02040c_100%)] font-['Noto_Sans',sans-serif]">
      <MenuBar />
      <div className="h-[1626px] w-[2879px] overflow-hidden rounded-[20px]">
        <TabStrip />
        <Toolbar />
        <AwsNav />
        <div className="flex h-[1327px] bg-white">
          <div className="w-[80px] shrink-0">
            <div className="ml-[26px] mt-[28px] flex w-[28px] flex-col gap-[6px]">
              <div className="h-[4px] bg-[#545b64]" />
              <div className="h-[4px] bg-[#545b64]" />
              <div className="h-[4px] bg-[#545b64]" />
            </div>
          </div>
          <div className="w-[2718px] shrink-0 bg-[#f2f3f3] shadow-[0_0_3px_#8f979c]">
            <Banner />
            <div className="pl-[80px]">
              <Content />
            </div>
          </div>
          <InfoIcon cls="ml-[24px] mt-[24px] text-[#545b64]" />
        </div>
        <Footer />
      </div>
      <Dock />
    </div>
  );
}
